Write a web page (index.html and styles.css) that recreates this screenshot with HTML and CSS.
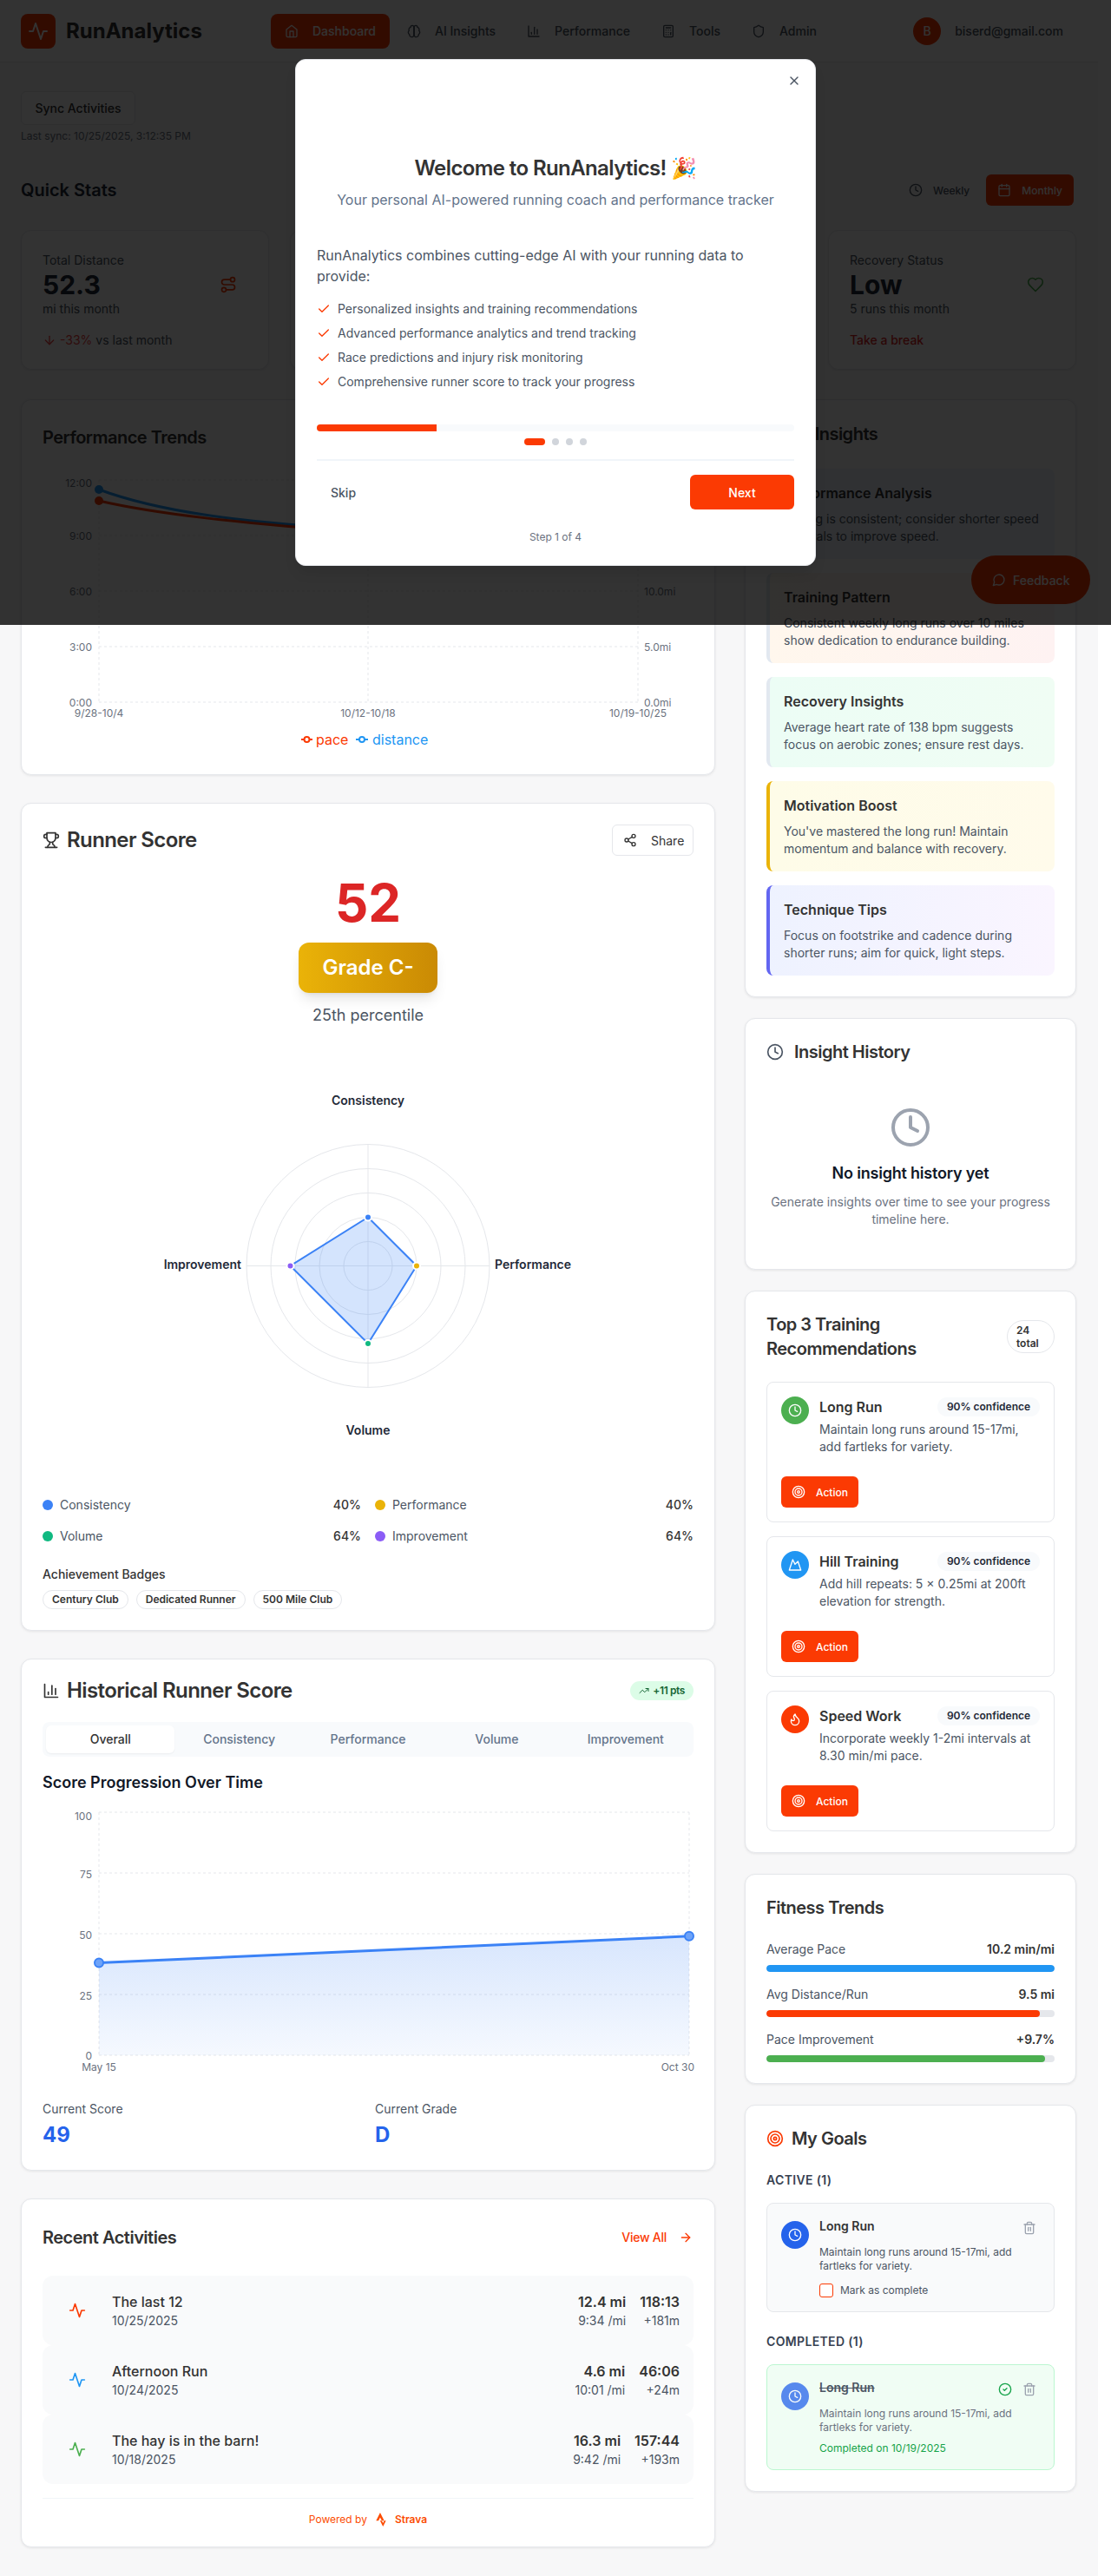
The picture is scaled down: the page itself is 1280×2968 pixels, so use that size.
FILE: index.html
```html
<!DOCTYPE html>
<html lang="en">
<head>
    <meta charset="UTF-8">
    <meta name="viewport" content="width=device-width, initial-scale=1.0">
    <title>RunAnalytics</title>
    <link rel="stylesheet" href="styles.css">
</head>
<body>

    <!-- Icon sprite -->
    <svg class="sprite" xmlns="http://www.w3.org/2000/svg">
        <symbol id="i-home" viewBox="0 0 24 24"><path d="m3 9 9-7 9 7v11a2 2 0 0 1-2 2H5a2 2 0 0 1-2-2z"/><polyline points="9 22 9 12 15 12 15 22"/></symbol>
        <symbol id="i-brain" viewBox="0 0 24 24"><path d="M12 5a3 3 0 1 0-5.997.125 4 4 0 0 0-2.526 5.77 4 4 0 0 0 .556 6.588A4 4 0 1 0 12 18Z"/><path d="M12 5a3 3 0 1 1 5.997.125 4 4 0 0 1 2.526 5.77 4 4 0 0 1-.556 6.588A4 4 0 1 1 12 18Z"/><path d="M12 5v13"/></symbol>
        <symbol id="i-bars" viewBox="0 0 24 24"><path d="M3 3v18h18"/><path d="M18 17V9"/><path d="M13 17V5"/><path d="M8 17v-3"/></symbol>
        <symbol id="i-calc" viewBox="0 0 24 24"><rect x="4" y="2" width="16" height="20" rx="2"/><line x1="8" y1="6" x2="16" y2="6"/><line x1="16" y1="14" x2="16" y2="18"/><path d="M16 10h.01"/><path d="M12 10h.01"/><path d="M8 10h.01"/><path d="M12 14h.01"/><path d="M8 14h.01"/><path d="M12 18h.01"/><path d="M8 18h.01"/></symbol>
        <symbol id="i-shield" viewBox="0 0 24 24"><path d="M20 13c0 5-3.5 7.5-7.66 8.95a1 1 0 0 1-.67-.01C7.5 20.5 4 18 4 13V6a1 1 0 0 1 1-1c2 0 4.5-1.2 6.24-2.72a1.17 1.17 0 0 1 1.52 0C14.51 3.81 17 5 19 5a1 1 0 0 1 1 1z"/></symbol>
        <symbol id="i-activity" viewBox="0 0 24 24"><path d="M22 12h-4l-3 9L9 3l-3 9H2"/></symbol>
        <symbol id="i-route" viewBox="0 0 24 24"><circle cx="6" cy="19" r="3"/><path d="M9 19h8.5a3.5 3.5 0 0 0 0-7h-11a3.5 3.5 0 0 1 0-7H15"/><circle cx="18" cy="5" r="3"/></symbol>
        <symbol id="i-heart" viewBox="0 0 24 24"><path d="M19 14c1.49-1.46 3-3.21 3-5.5A5.5 5.5 0 0 0 16.5 3c-1.76 0-3 .5-4.5 2-1.5-1.5-2.74-2-4.5-2A5.5 5.5 0 0 0 2 8.5c0 2.3 1.5 4.05 3 5.5l7 7Z"/></symbol>
        <symbol id="i-clock" viewBox="0 0 24 24"><circle cx="12" cy="12" r="10"/><polyline points="12 6 12 12 16 14"/></symbol>
        <symbol id="i-calendar" viewBox="0 0 24 24"><rect x="3" y="4" width="18" height="18" rx="2"/><line x1="16" y1="2" x2="16" y2="6"/><line x1="8" y1="2" x2="8" y2="6"/><line x1="3" y1="10" x2="21" y2="10"/></symbol>
        <symbol id="i-arrow-down" viewBox="0 0 24 24"><path d="M12 5v14"/><path d="m19 12-7 7-7-7"/></symbol>
        <symbol id="i-arrow-right" viewBox="0 0 24 24"><path d="M5 12h14"/><path d="m12 5 7 7-7 7"/></symbol>
        <symbol id="i-trophy" viewBox="0 0 24 24"><path d="M6 9H4.5a2.5 2.5 0 0 1 0-5H6"/><path d="M18 9h1.5a2.5 2.5 0 0 0 0-5H18"/><path d="M4 22h16"/><path d="M10 14.66V17c0 .55-.47.98-.97 1.21C7.85 18.75 7 20.24 7 22"/><path d="M14 14.66V17c0 .55.47.98.97 1.21C16.15 18.75 17 20.24 17 22"/><path d="M18 2H6v7a6 6 0 0 0 12 0V2Z"/></symbol>
        <symbol id="i-share" viewBox="0 0 24 24"><circle cx="18" cy="5" r="3"/><circle cx="6" cy="12" r="3"/><circle cx="18" cy="19" r="3"/><line x1="8.59" y1="13.51" x2="15.42" y2="17.49"/><line x1="15.41" y1="6.51" x2="8.59" y2="10.49"/></symbol>
        <symbol id="i-trend" viewBox="0 0 24 24"><polyline points="22 7 13.5 15.5 8.5 10.5 2 17"/><polyline points="16 7 22 7 22 13"/></symbol>
        <symbol id="i-target" viewBox="0 0 24 24"><circle cx="12" cy="12" r="10"/><circle cx="12" cy="12" r="6"/><circle cx="12" cy="12" r="2"/></symbol>
        <symbol id="i-mountain" viewBox="0 0 24 24"><path d="m8 3 4 8 5-5 5 15H2L8 3z"/></symbol>
        <symbol id="i-flame" viewBox="0 0 24 24"><path d="M8.5 14.5A2.5 2.5 0 0 0 11 12c0-1.38-.5-2-1-3-1.072-2.143-.224-4.054 2-6 .5 2.5 2 4.9 4 6.5 2 1.6 3 3.5 3 5.5a7 7 0 1 1-14 0c0-1.153.433-2.294 1-3a2.5 2.5 0 0 0 2.5 2.5z"/></symbol>
        <symbol id="i-trash" viewBox="0 0 24 24"><path d="M3 6h18"/><path d="M19 6v14c0 1-1 2-2 2H7c-1 0-2-1-2-2V6"/><path d="M8 6V4c0-1 1-2 2-2h4c1 0 2 1 2 2v2"/><line x1="10" y1="11" x2="10" y2="17"/><line x1="14" y1="11" x2="14" y2="17"/></symbol>
        <symbol id="i-check-circle" viewBox="0 0 24 24"><circle cx="12" cy="12" r="10"/><path d="m9 12 2 2 4-4"/></symbol>
        <symbol id="i-check" viewBox="0 0 24 24"><path d="M20 6 9 17l-5-5"/></symbol>
        <symbol id="i-x" viewBox="0 0 24 24"><path d="M18 6 6 18"/><path d="m6 6 12 12"/></symbol>
        <symbol id="i-message" viewBox="0 0 24 24"><path d="M7.9 20A9 9 0 1 0 4 16.1L2 22Z"/></symbol>
    </svg>

    <div class="page">
        <!-- Top navigation -->
        <header class="topbar">
            <div class="brand">
                <span class="brand-mark"><svg class="icon icon-24"><use href="#i-activity"/></svg></span>
                <span class="brand-name">RunAnalytics</span>
            </div>
            <nav class="nav-links">
                <a class="nav-link active"><svg class="icon"><use href="#i-home"/></svg>Dashboard</a>
                <a class="nav-link"><svg class="icon"><use href="#i-brain"/></svg>AI Insights</a>
                <a class="nav-link"><svg class="icon"><use href="#i-bars"/></svg>Performance</a>
                <a class="nav-link"><svg class="icon"><use href="#i-calc"/></svg>Tools</a>
                <a class="nav-link"><svg class="icon"><use href="#i-shield"/></svg>Admin</a>
            </nav>
            <div class="user-menu">
                <span class="avatar">B</span>
                <span class="user-email">biserd@gmail.com</span>
            </div>
        </header>

        <main class="main">
            <button class="sync-btn">Sync Activities</button>
            <div class="last-sync">Last sync: 10/25/2025, 3:12:35 PM</div>

            <!-- Quick stats -->
            <div class="stats-head">
                <h2 class="stats-title">Quick Stats</h2>
                <div class="range-toggle">
                    <button class="range-btn"><svg class="icon"><use href="#i-clock"/></svg>Weekly</button>
                    <button class="range-btn active"><svg class="icon"><use href="#i-calendar"/></svg>Monthly</button>
                </div>
            </div>

            <div class="stats-grid">
                <div class="stat-card">
                    <div class="stat-top">
                        <div>
                            <div class="stat-label">Total Distance</div>
                            <div class="stat-value">52.3</div>
                            <div class="stat-sub">mi this month</div>
                        </div>
                        <svg class="icon icon-20 stat-icon orange"><use href="#i-route"/></svg>
                    </div>
                    <div class="stat-note"><svg class="icon red"><use href="#i-arrow-down"/></svg><span class="red">-33%</span> vs last month</div>
                </div>
                <!-- These two cards sit fully behind the dialog -->
                <div class="stat-card"></div>
                <div class="stat-card"></div>
                <div class="stat-card">
                    <div class="stat-top">
                        <div>
                            <div class="stat-label">Recovery Status</div>
                            <div class="stat-value">Low</div>
                            <div class="stat-sub">5 runs this month</div>
                        </div>
                        <svg class="icon icon-20 stat-icon green"><use href="#i-heart"/></svg>
                    </div>
                    <div class="stat-note strong-red">Take a break</div>
                </div>
            </div>

            <div class="columns">
                <!-- Left column -->
                <div class="col">
                    <section class="card trends-card">
                        <h3 class="card-title">Performance Trends</h3>
                        <svg class="chart" width="750" height="338" viewBox="0 0 750 338">
                            <g class="grid-lines">
                                <line x1="65" y1="23" x2="686" y2="23"/>
                                <line x1="65" y1="87" x2="686" y2="87"/>
                                <line x1="65" y1="151" x2="686" y2="151"/>
                                <line x1="65" y1="215" x2="686" y2="215"/>
                                <line x1="65" y1="279" x2="686" y2="279"/>
                                <line x1="65" y1="23" x2="65" y2="279"/>
                                <line x1="375" y1="23" x2="375" y2="279"/>
                                <line x1="686" y1="23" x2="686" y2="279"/>
                            </g>
                            <g class="axis-text anchor-end">
                                <text x="57" y="26">12:00</text>
                                <text x="57" y="87">9:00</text>
                                <text x="57" y="151">6:00</text>
                                <text x="57" y="215">3:00</text>
                                <text x="57" y="279">0:00</text>
                            </g>
                            <g class="axis-text">
                                <text x="693" y="151">10.0mi</text>
                                <text x="693" y="215">5.0mi</text>
                                <text x="693" y="279">0.0mi</text>
                            </g>
                            <g class="axis-text anchor-mid">
                                <text x="65" y="291">9/28-10/4</text>
                                <text x="375" y="291">10/12-10/18</text>
                                <text x="686" y="291">10/19-10/25</text>
                            </g>
                            <path class="line-distance" d="M65 34 C130 58 220 72 375 80 S600 78 686 70"/>
                            <path class="line-pace" d="M65 47 C130 62 220 72 375 84 S600 90 686 82"/>
                            <circle class="dot-distance" cx="65" cy="34" r="5"/>
                            <circle class="dot-pace" cx="65" cy="47" r="5"/>
                            <line class="line-pace thin" x1="298" y1="322" x2="311" y2="322"/>
                            <circle class="legend-pace" cx="304.5" cy="322" r="3"/>
                            <text class="legend-text pace-text" x="315" y="322">pace</text>
                            <line class="line-distance thin" x1="361" y1="322" x2="375" y2="322"/>
                            <circle class="legend-distance" cx="368" cy="322" r="3"/>
                            <text class="legend-text distance-text" x="380" y="322">distance</text>
                        </svg>
                    </section>

                    <section class="card score-card">
                        <div class="card-head">
                            <h3 class="big-title"><svg class="icon icon-20"><use href="#i-trophy"/></svg>Runner Score</h3>
                            <button class="share-btn"><svg class="icon"><use href="#i-share"/></svg>Share</button>
                        </div>
                        <div class="score-num">52</div>
                        <div class="grade-badge">Grade C-</div>
                        <div class="percentile">25th percentile</div>

                        <svg class="chart" width="750" height="510" viewBox="0 0 750 510">
                            <g class="radar-grid">
                                <circle cx="375" cy="260.5" r="28"/>
                                <circle cx="375" cy="260.5" r="56"/>
                                <circle cx="375" cy="260.5" r="84"/>
                                <circle cx="375" cy="260.5" r="112"/>
                                <circle cx="375" cy="260.5" r="140"/>
                                <line x1="375" y1="120.5" x2="375" y2="400.5"/>
                                <line x1="235" y1="260.5" x2="515" y2="260.5"/>
                            </g>
                            <polygon class="radar-shape" points="375,204.5 431,260.5 375,350 285.5,260.5"/>
                            <circle class="radar-dot dot-a" cx="375" cy="204.5" r="4"/>
                            <circle class="radar-dot dot-b" cx="431" cy="260.5" r="4"/>
                            <circle class="radar-dot dot-c" cx="375" cy="350" r="4"/>
                            <circle class="radar-dot dot-d" cx="285.5" cy="260.5" r="4"/>
                            <text class="radar-label anchor-mid" x="375" y="69">Consistency</text>
                            <text class="radar-label" x="521" y="258">Performance</text>
                            <text class="radar-label anchor-mid" x="375" y="449">Volume</text>
                            <text class="radar-label anchor-end" x="229" y="258">Improvement</text>
                        </svg>

                        <div class="score-legend">
                            <div class="legend-row"><span class="legend-dot bg-a"></span><span class="legend-name">Consistency</span><span class="legend-val">40%</span></div>
                            <div class="legend-row"><span class="legend-dot bg-b"></span><span class="legend-name">Performance</span><span class="legend-val">40%</span></div>
                            <div class="legend-row"><span class="legend-dot bg-c"></span><span class="legend-name">Volume</span><span class="legend-val">64%</span></div>
                            <div class="legend-row"><span class="legend-dot bg-d"></span><span class="legend-name">Improvement</span><span class="legend-val">64%</span></div>
                        </div>

                        <div class="badges-title">Achievement Badges</div>
                        <div class="badges">
                            <span class="badge">Century Club</span>
                            <span class="badge">Dedicated Runner</span>
                            <span class="badge">500 Mile Club</span>
                        </div>
                    </section>

                    <section class="card history-card">
                        <div class="card-head">
                            <h3 class="big-title"><svg class="icon icon-20"><use href="#i-bars"/></svg>Historical Runner Score</h3>
                            <span class="points-badge"><svg class="icon icon-12"><use href="#i-trend"/></svg>+11 pts</span>
                        </div>
                        <div class="tabs">
                            <div class="tab active">Overall</div>
                            <div class="tab">Consistency</div>
                            <div class="tab">Performance</div>
                            <div class="tab">Volume</div>
                            <div class="tab">Improvement</div>
                        </div>
                        <h4 class="sub-title">Score Progression Over Time</h4>
                        <svg class="chart" width="751" height="312" viewBox="0 0 751 312">
                            <defs>
                                <linearGradient id="area-fill" x1="0" y1="0" x2="0" y2="1">
                                    <stop offset="0" stop-color="#3b82f6" stop-opacity="0.2"/>
                                    <stop offset="1" stop-color="#3b82f6" stop-opacity="0.05"/>
                                </linearGradient>
                            </defs>
                            <g class="grid-lines">
                                <line x1="65" y1="8" x2="745" y2="8"/>
                                <line x1="65" y1="78" x2="745" y2="78"/>
                                <line x1="65" y1="148" x2="745" y2="148"/>
                                <line x1="65" y1="218" x2="745" y2="218"/>
                                <line x1="65" y1="288" x2="745" y2="288"/>
                                <line x1="65" y1="8" x2="65" y2="288"/>
                                <line x1="745" y1="8" x2="745" y2="288"/>
                            </g>
                            <g class="axis-text anchor-end">
                                <text x="57" y="12.5">100</text>
                                <text x="57" y="79">75</text>
                                <text x="57" y="149">50</text>
                                <text x="57" y="219">25</text>
                                <text x="57" y="288">0</text>
                            </g>
                            <text class="axis-text anchor-mid" x="65" y="301">May 15</text>
                            <text class="axis-text anchor-end" x="751" y="301">Oct 30</text>
                            <polygon points="65,181.6 745,150.8 745,288 65,288" fill="url(#area-fill)"/>
                            <line class="score-line" x1="65" y1="181.6" x2="745" y2="150.8"/>
                            <circle class="score-dot" cx="65" cy="181.6" r="5"/>
                            <circle class="score-dot" cx="745" cy="150.8" r="5"/>
                        </svg>
                        <div class="current-row">
                            <div>
                                <div class="current-label">Current Score</div>
                                <div class="current-value">49</div>
                            </div>
                            <div>
                                <div class="current-label">Current Grade</div>
                                <div class="current-value">D</div>
                            </div>
                        </div>
                    </section>

                    <section class="card recent-card">
                        <div class="recent-head">
                            <h3 class="card-title">Recent Activities</h3>
                            <a class="view-all">View All<svg class="icon"><use href="#i-arrow-right"/></svg></a>
                        </div>
                        <div class="activity">
                            <span class="activity-icon orange"><svg class="icon icon-20"><use href="#i-activity"/></svg></span>
                            <div class="activity-info">
                                <div class="activity-name">The last 12</div>
                                <div class="activity-date">10/25/2025</div>
                            </div>
                            <div class="activity-stat">
                                <div class="stat-main">12.4 mi</div>
                                <div class="stat-minor">9:34 /mi</div>
                            </div>
                            <div class="activity-stat">
                                <div class="stat-main">118:13</div>
                                <div class="stat-minor">+181m</div>
                            </div>
                        </div>
                        <div class="activity">
                            <span class="activity-icon blue"><svg class="icon icon-20"><use href="#i-activity"/></svg></span>
                            <div class="activity-info">
                                <div class="activity-name">Afternoon Run</div>
                                <div class="activity-date">10/24/2025</div>
                            </div>
                            <div class="activity-stat">
                                <div class="stat-main">4.6 mi</div>
                                <div class="stat-minor">10:01 /mi</div>
                            </div>
                            <div class="activity-stat">
                                <div class="stat-main">46:06</div>
                                <div class="stat-minor">+24m</div>
                            </div>
                        </div>
                        <div class="activity">
                            <span class="activity-icon green"><svg class="icon icon-20"><use href="#i-activity"/></svg></span>
                            <div class="activity-info">
                                <div class="activity-name">The hay is in the barn!</div>
                                <div class="activity-date">10/18/2025</div>
                            </div>
                            <div class="activity-stat">
                                <div class="stat-main">16.3 mi</div>
                                <div class="stat-minor">9:42 /mi</div>
                            </div>
                            <div class="activity-stat">
                                <div class="stat-main">157:44</div>
                                <div class="stat-minor">+193m</div>
                            </div>
                        </div>
                        <div class="powered">
                            Powered by
                            <svg class="strava-mark" viewBox="0 0 24 24"><path d="M15.387 17.944l-2.089-4.116h-3.065L15.387 24l5.15-10.172h-3.066m-7.008-5.599l2.836 5.598h4.172L10.463 0l-7 13.828h4.169"/></svg>
                            <strong>Strava</strong>
                        </div>
                    </section>
                </div>

                <!-- Right column -->
                <div class="col col-right">
                    <section class="card insights-card">
                        <h3 class="card-title with-icon"><svg class="icon icon-20 orange"><use href="#i-brain"/></svg>AI Insights</h3>
                        <div class="insight insight-blue">
                            <h4>Performance Analysis</h4>
                            <p>Pacing is consistent; consider shorter speed intervals to improve speed.</p>
                        </div>
                        <div class="insight insight-orange">
                            <h4>Training Pattern</h4>
                            <p>Consistent weekly long runs over 10 miles show dedication to endurance building.</p>
                        </div>
                        <div class="insight insight-green">
                            <h4>Recovery Insights</h4>
                            <p>Average heart rate of 138 bpm suggests focus on aerobic zones; ensure rest days.</p>
                        </div>
                        <div class="insight insight-yellow">
                            <h4>Motivation Boost</h4>
                            <p>You've mastered the long run! Maintain momentum and balance with recovery.</p>
                        </div>
                        <div class="insight insight-purple">
                            <h4>Technique Tips</h4>
                            <p>Focus on footstrike and cadence during shorter runs; aim for quick, light steps.</p>
                        </div>
                    </section>

                    <section class="card empty-card">
                        <h3 class="card-title with-icon"><svg class="icon icon-20 slate"><use href="#i-clock"/></svg>Insight History</h3>
                        <div class="empty-state">
                            <svg class="icon icon-48"><use href="#i-clock"/></svg>
                            <div class="empty-title">No insight history yet</div>
                            <p>Generate insights over time to see your progress timeline here.</p>
                        </div>
                    </section>

                    <section class="card recs-card">
                        <div class="recs-head">
                            <h3 class="card-title">Top 3 Training Recommendations</h3>
                            <span class="total-badge">24 total</span>
                        </div>
                        <div class="rec">
                            <span class="round-icon bg-green"><svg class="icon"><use href="#i-clock"/></svg></span>
                            <div class="rec-body">
                                <div class="rec-top">
                                    <span class="rec-name">Long Run</span>
                                    <span class="confidence">90% confidence</span>
                                </div>
                                <p>Maintain long runs around 15-17mi, add fartleks for variety.</p>
                            </div>
                            <button class="action-btn"><svg class="icon"><use href="#i-target"/></svg>Action</button>
                        </div>
                        <div class="rec">
                            <span class="round-icon bg-blue"><svg class="icon"><use href="#i-mountain"/></svg></span>
                            <div class="rec-body">
                                <div class="rec-top">
                                    <span class="rec-name">Hill Training</span>
                                    <span class="confidence">90% confidence</span>
                                </div>
                                <p>Add hill repeats: 5 × 0.25mi at 200ft elevation for strength.</p>
                            </div>
                            <button class="action-btn"><svg class="icon"><use href="#i-target"/></svg>Action</button>
                        </div>
                        <div class="rec">
                            <span class="round-icon bg-orange"><svg class="icon"><use href="#i-flame"/></svg></span>
                            <div class="rec-body">
                                <div class="rec-top">
                                    <span class="rec-name">Speed Work</span>
                                    <span class="confidence">90% confidence</span>
                                </div>
                                <p>Incorporate weekly 1-2mi intervals at 8.30 min/mi pace.</p>
                            </div>
                            <button class="action-btn"><svg class="icon"><use href="#i-target"/></svg>Action</button>
                        </div>
                    </section>

                    <section class="card fitness-card">
                        <h3 class="card-title">Fitness Trends</h3>
                        <div class="metric">
                            <div class="metric-row"><span>Average Pace</span><strong>10.2 min/mi</strong></div>
                            <div class="track"><div class="fill bg-blue" style="width: 100%"></div></div>
                        </div>
                        <div class="metric">
                            <div class="metric-row"><span>Avg Distance/Run</span><strong>9.5 mi</strong></div>
                            <div class="track"><div class="fill bg-orange" style="width: 95%"></div></div>
                        </div>
                        <div class="metric">
                            <div class="metric-row"><span>Pace Improvement</span><strong>+9.7%</strong></div>
                            <div class="track"><div class="fill bg-green" style="width: 96.7%"></div></div>
                        </div>
                    </section>

                    <section class="card goals-card">
                        <h3 class="card-title goals-title"><svg class="icon icon-20 orange"><use href="#i-target"/></svg>My Goals</h3>
                        <div class="goal-group">ACTIVE (1)</div>
                        <div class="goal">
                            <span class="round-icon goal-icon bg-royal"><svg class="icon"><use href="#i-clock"/></svg></span>
                            <div class="goal-body">
                                <div class="goal-top">
                                    <span class="goal-name">Long Run</span>
                                    <svg class="icon goal-trash"><use href="#i-trash"/></svg>
                                </div>
                                <p class="goal-text">Maintain long runs around 15-17mi, add fartleks for variety.</p>
                                <div class="goal-mark"><span class="checkbox"></span>Mark as complete</div>
                            </div>
                        </div>
                        <div class="goal-group">COMPLETED (1)</div>
                        <div class="goal done">
                            <span class="round-icon goal-icon bg-royal"><svg class="icon"><use href="#i-clock"/></svg></span>
                            <div class="goal-body">
                                <div class="goal-top">
                                    <span class="goal-name">Long Run</span>
                                    <svg class="icon goal-check"><use href="#i-check-circle"/></svg>
                                    <svg class="icon goal-trash"><use href="#i-trash"/></svg>
                                </div>
                                <p class="goal-text">Maintain long runs around 15-17mi, add fartleks for variety.</p>
                                <div class="goal-date">Completed on 10/19/2025</div>
                            </div>
                        </div>
                    </section>
                </div>
            </div>
        </main>

        <button class="feedback-btn"><svg class="icon"><use href="#i-message"/></svg>Feedback</button>
    </div>

    <!-- Welcome dialog -->
    <div class="overlay">
        <div class="modal">
            <svg class="icon modal-close"><use href="#i-x"/></svg>
            <div class="modal-head">
                <h2>Welcome to RunAnalytics! 🎉</h2>
                <p>Your personal AI-powered running coach and performance tracker</p>
            </div>
            <p class="modal-text">RunAnalytics combines cutting-edge AI with your running data to provide:</p>
            <ul class="modal-list">
                <li><svg class="icon orange"><use href="#i-check"/></svg>Personalized insights and training recommendations</li>
                <li><svg class="icon orange"><use href="#i-check"/></svg>Advanced performance analytics and trend tracking</li>
                <li><svg class="icon orange"><use href="#i-check"/></svg>Race predictions and injury risk monitoring</li>
                <li><svg class="icon orange"><use href="#i-check"/></svg>Comprehensive runner score to track your progress</li>
            </ul>
            <div class="modal-progress"><div class="modal-progress-fill"></div></div>
            <div class="step-dots">
                <span class="step-dot current"></span>
                <span class="step-dot"></span>
                <span class="step-dot"></span>
                <span class="step-dot"></span>
            </div>
            <div class="modal-actions">
                <button class="skip-btn">Skip</button>
                <button class="next-btn">Next</button>
            </div>
            <div class="step-text">Step 1 of 4</div>
        </div>
    </div>

</body>
</html>
```

FILE: styles.css
```css
* {
    box-sizing: border-box;
}
body {
    margin: 0;
    background-color: #fff;
    color: #333;
    font-family: Inter, "Noto Sans", sans-serif;
    font-size: 14px;
    line-height: 20px;
}
h2, h3, h4, p, ul {
    margin: 0;
    padding: 0;
}
button {
    font-family: inherit;
}
.sprite {
    display: none;
}

/* Icons */
.icon {
    width: 16px;
    height: 16px;
    flex: none;
    fill: none;
    stroke: currentColor;
    stroke-width: 2;
    stroke-linecap: round;
    stroke-linejoin: round;
}
.icon-12 { width: 12px; height: 12px; }
.icon-20 { width: 20px; height: 20px; }
.icon-24 { width: 24px; height: 24px; }
.icon-48 { width: 48px; height: 48px; }
.orange { color: #fb3a03; }
.blue { color: #2196f3; }
.green { color: #4caf50; }
.red { color: #ef4444; }
.slate { color: #4b5563; }
.bg-orange { background-color: #fb3a03; }
.bg-blue { background-color: #2196f3; }
.bg-green { background-color: #4caf50; }
.bg-royal { background-color: #2563eb; }

.page {
    position: relative;
    width: 1265px;
    min-height: 2968px;
    background-color: #f7f7f8;
}

/* Top navigation */
.topbar {
    display: flex;
    align-items: center;
    height: 72px;
    padding: 0 40px 0 24px;
    background-color: #fff;
    border-bottom: 1px solid #e5e7eb;
}
.brand {
    display: flex;
    align-items: center;
    gap: 12px;
    width: 288px;
}
.brand-mark {
    display: flex;
    align-items: center;
    justify-content: center;
    width: 40px;
    height: 40px;
    border-radius: 8px;
    background-color: #fb3a03;
    color: #fff;
}
.brand-name {
    font-size: 24px;
    line-height: 32px;
    font-weight: 700;
    color: #333;
}
.nav-links {
    display: flex;
    gap: 4px;
}
.nav-link {
    display: flex;
    align-items: center;
    gap: 16px;
    height: 40px;
    padding: 0 16px;
    border-radius: 8px;
    color: #4b5563;
    font-weight: 500;
}
.nav-link.active {
    background-color: #fb3a03;
    color: #fff;
}
.user-menu {
    display: flex;
    align-items: center;
    gap: 16px;
    margin-left: auto;
}
.avatar {
    display: flex;
    align-items: center;
    justify-content: center;
    width: 32px;
    height: 32px;
    border-radius: 50%;
    background-color: #fb3a03;
    color: #fff;
    font-weight: 500;
}
.user-email {
    font-weight: 500;
    color: #4b5563;
}

.main {
    padding: 33px 25px 0 24px;
}
.sync-btn {
    display: block;
    width: 132px;
    height: 39px;
    padding: 0;
    border: 1px solid #e5e7eb;
    border-radius: 6px;
    background-color: #fff;
    color: #333;
    font-size: 14px;
    font-weight: 500;
}
.last-sync {
    margin-top: 5px;
    font-size: 12px;
    line-height: 16px;
    color: #6b7280;
}

/* Quick stats */
.stats-head {
    display: flex;
    align-items: center;
    justify-content: space-between;
    margin: 32px 0 24px;
}
.stats-title {
    font-size: 20px;
    line-height: 28px;
    font-weight: 600;
    color: #1f2937;
}
.range-toggle {
    display: flex;
    gap: 6px;
    margin-right: -1px;
    padding: 4px;
    border-radius: 8px;
    background-color: #f9fafb;
}
.range-btn {
    display: flex;
    align-items: center;
    gap: 12px;
    height: 36px;
    padding: 0 13px;
    border: 0;
    border-radius: 6px;
    background: none;
    color: #4b5563;
    font-size: 12px;
    font-weight: 500;
}
.range-btn.active {
    background-color: #fb3a03;
    color: #fff;
}
.stats-grid {
    display: grid;
    grid-template-columns: repeat(4, 1fr);
    gap: 24px;
}
.stat-card {
    height: 161px;
    padding: 24px;
    background-color: #fff;
    border: 1px solid #e5e7eb;
    border-radius: 12px;
    box-shadow: 0 1px 2px rgba(0, 0, 0, 0.05);
}
.stat-top {
    display: flex;
    align-items: center;
    justify-content: space-between;
}
.stat-icon {
    margin-right: 12px;
}
.stat-label, .stat-sub {
    color: #4b5563;
}
.stat-value {
    font-size: 30px;
    line-height: 36px;
    font-weight: 700;
    color: #1f2937;
}
.stat-note {
    display: flex;
    align-items: center;
    gap: 4px;
    margin-top: 16px;
    color: #4b5563;
}
.strong-red {
    color: #dc2626;
    font-weight: 500;
}

/* Columns and cards */
.columns {
    display: grid;
    grid-template-columns: 800px 382px;
    gap: 34px;
    margin-top: 34px;
    align-items: start;
}
.col {
    display: flex;
    flex-direction: column;
    gap: 32px;
}
.col-right {
    gap: 24px;
}
.card {
    padding: 24px;
    background-color: #fff;
    border: 1px solid #e5e7eb;
    border-radius: 12px;
    box-shadow: 0 1px 3px rgba(0, 0, 0, 0.08);
}
.card-title {
    font-size: 20px;
    line-height: 28px;
    font-weight: 600;
    letter-spacing: -0.5px;
    color: #333;
}
.card-title.with-icon {
    display: flex;
    align-items: center;
    gap: 12px;
}
.card-head {
    display: flex;
    align-items: center;
    justify-content: space-between;
}
.big-title {
    display: flex;
    align-items: center;
    gap: 8px;
    font-size: 24px;
    line-height: 32px;
    font-weight: 600;
    letter-spacing: -0.6px;
    color: #333;
}
.chart {
    display: block;
}

/* Chart parts */
.grid-lines line {
    stroke: #e5e7eb;
    stroke-dasharray: 3 3;
}
.axis-text, .axis-text text {
    font-size: 12px;
    fill: #6b7280;
    dominant-baseline: central;
}
.anchor-end, .anchor-end text {
    text-anchor: end;
}
.anchor-mid, .anchor-mid text {
    text-anchor: middle;
}
.line-distance, .line-pace {
    fill: none;
    stroke-width: 3;
}
.line-distance { stroke: #2196f3; }
.line-pace { stroke: #fb3a03; }
.line-distance.thin, .line-pace.thin {
    stroke-width: 2;
}
.dot-distance { fill: #2196f3; }
.dot-pace { fill: #fb3a03; }
.legend-pace, .legend-distance {
    fill: #fff;
    stroke-width: 2;
}
.legend-pace { stroke: #fb3a03; }
.legend-distance { stroke: #2196f3; }
.legend-text {
    font-size: 16px;
    dominant-baseline: central;
}
.pace-text { fill: #fb3a03; }
.distance-text { fill: #2196f3; }
.score-line {
    stroke: #3b82f6;
    stroke-width: 3;
}
.score-dot {
    fill: #6ea3f8;
    stroke: #3b82f6;
    stroke-width: 2;
}

/* Performance trends */
.trends-card {
    padding-top: 29px;
}
.trends-card .chart {
    margin-top: 12px;
}

/* Runner score */
.share-btn {
    display: flex;
    align-items: center;
    gap: 16px;
    width: 94px;
    height: 36px;
    padding: 0 12px;
    background-color: #fff;
    border: 1px solid #e5e7eb;
    border-radius: 6px;
    color: #333;
    font-size: 14px;
    font-weight: 400;
}
.score-num {
    margin-top: 24px;
    text-align: center;
    font-size: 60px;
    line-height: 60px;
    font-weight: 700;
    color: #dc2626;
}
.grade-badge {
    width: 160px;
    margin: 16px auto 0;
    padding: 13px 0;
    border-radius: 12px;
    background: linear-gradient(to right, #eab308, #ca8a04);
    box-shadow: 0 10px 15px -3px rgba(0, 0, 0, 0.1), 0 4px 6px -4px rgba(0, 0, 0, 0.1);
    text-align: center;
    color: #fff;
    font-size: 24px;
    line-height: 32px;
    font-weight: 600;
}
.percentile {
    margin: 12px 0 14px;
    text-align: center;
    font-size: 18px;
    line-height: 28px;
    color: #4b5563;
}
.radar-grid circle, .radar-grid line {
    fill: none;
    stroke: #e5e7eb;
}
.radar-shape {
    fill: #3b82f6;
    fill-opacity: 0.22;
    stroke: #3b82f6;
    stroke-width: 2;
}
.radar-dot {
    stroke: #fff;
    stroke-width: 2;
}
.dot-a { fill: #3b82f6; }
.dot-b { fill: #eab308; }
.dot-c { fill: #10b981; }
.dot-d { fill: #8b5cf6; }
.radar-label {
    font-size: 14px;
    font-weight: 600;
    fill: #1f2937;
    dominant-baseline: central;
}
.score-legend {
    display: grid;
    grid-template-columns: 1fr 1fr;
    gap: 16px;
    margin-top: 16px;
}
.legend-row {
    display: flex;
    align-items: center;
}
.legend-dot {
    width: 12px;
    height: 12px;
    margin-right: 8px;
    border-radius: 50%;
}
.bg-a { background-color: #3b82f6; }
.bg-b { background-color: #eab308; }
.bg-c { background-color: #10b981; }
.bg-d { background-color: #8b5cf6; }
.legend-name {
    color: #4b5563;
}
.legend-val {
    margin-left: auto;
    font-weight: 500;
}
.badges-title {
    margin-top: 24px;
    font-weight: 500;
}
.badges {
    display: flex;
    gap: 9px;
    margin-top: 8px;
}
.badge {
    height: 22px;
    padding: 0 10px;
    border: 1px solid #e5e7eb;
    border-radius: 11px;
    font-size: 12px;
    line-height: 20px;
    font-weight: 600;
    color: #333;
}

/* Historical score */
.history-card {
    padding-top: 20px;
}
.points-badge {
    display: flex;
    align-items: center;
    gap: 4px;
    height: 22px;
    padding: 0 10px;
    border-radius: 11px;
    background-color: #dcfce7;
    color: #166534;
    font-size: 12px;
    font-weight: 600;
    letter-spacing: -0.4px;
}
.tabs {
    display: flex;
    height: 40px;
    margin-top: 20px;
    padding: 4px;
    border-radius: 8px;
    background-color: #f8fafc;
}
.tab {
    flex: 1;
    display: flex;
    align-items: center;
    justify-content: center;
    border-radius: 6px;
    font-weight: 500;
    color: #64748b;
}
.tab.active {
    background-color: #fff;
    color: #333;
    box-shadow: 0 1px 2px rgba(0, 0, 0, 0.05);
}
.sub-title {
    margin: 16px 0 12px;
    font-size: 18px;
    line-height: 28px;
    font-weight: 600;
    color: #111827;
}
.current-row {
    display: grid;
    grid-template-columns: 1fr 1fr;
    gap: 16px;
    margin-top: 28px;
}
.current-label {
    color: #4b5563;
}
.current-value {
    margin-top: 4px;
    font-size: 24px;
    line-height: 32px;
    font-weight: 700;
    color: #2563eb;
}

/* Recent activities */
.recent-card {
    padding: 30px 24px 23px;
}
.recent-head {
    display: flex;
    align-items: center;
    justify-content: space-between;
    margin-bottom: 30px;
}
.view-all {
    display: flex;
    align-items: center;
    gap: 14px;
    margin-right: 1px;
    color: #fb3a03;
    font-weight: 500;
    letter-spacing: -0.25px;
}
.activity {
    display: flex;
    align-items: center;
    gap: 16px;
    height: 80px;
    padding: 0 16px;
    border-radius: 12px;
    background-color: #f9fafb;
}
.activity-icon {
    display: flex;
    justify-content: center;
    width: 48px;
}
.activity-info {
    flex: 1;
}
.activity-name, .stat-main {
    font-size: 16px;
    line-height: 24px;
    font-weight: 500;
    color: #333;
}
.stat-main {
    font-weight: 600;
}
.activity-date, .stat-minor {
    color: #4b5563;
}
.activity-stat {
    text-align: right;
}
.powered {
    display: flex;
    align-items: center;
    justify-content: center;
    gap: 8px;
    margin-top: 16px;
    padding-top: 16px;
    border-top: 1px solid #f1f5f9;
    font-size: 12px;
    line-height: 16px;
    color: #fc4c02;
}
.powered strong {
    font-weight: 600;
}
.strava-mark {
    width: 16px;
    height: 16px;
    fill: #fc4c02;
}

/* AI insights */
.insights-card {
    padding-top: 25px;
}
.insights-card .card-title {
    margin-bottom: 26px;
}
.insight {
    height: 104px;
    margin-top: 16px;
    padding: 16px;
    border-left: 4px solid #e2e8f0;
    border-radius: 8px;
}
.insights-card .card-title + .insight {
    margin-top: 0;
}
.insight h4 {
    font-size: 16px;
    line-height: 24px;
    font-weight: 600;
    color: #333;
    margin-bottom: 8px;
}
.insight p {
    color: #4b5563;
}
.insight-blue { background: linear-gradient(to right, #eff6ff, #eef2ff); }
.insight-orange { background: linear-gradient(to right, #fff7ed, #fef2f2); }
.insight-green { background: linear-gradient(to right, #ecfdf5, #f0fdf4); }
.insight-yellow {
    background: linear-gradient(to right, #fefce8, #fffbeb);
    border-left-color: #eab308;
}
.insight-purple {
    background: linear-gradient(to right, #eef2ff, #faf5ff);
    border-left-color: #6366f1;
}

/* Insight history */
.empty-card {
    height: 290px;
}
.empty-state {
    margin-top: 49px;
    text-align: center;
}
.empty-state .icon {
    display: block;
    margin: 0 auto;
    color: #9ca3af;
}
.empty-title {
    margin-top: 17px;
    font-size: 18px;
    line-height: 24px;
    font-weight: 600;
    letter-spacing: -0.2px;
    color: #111827;
}
.empty-state p {
    margin-top: 11px;
    color: #6b7280;
}

/* Recommendations */
.recs-head {
    display: flex;
    align-items: center;
    justify-content: space-between;
    gap: 16px;
    margin-bottom: 24px;
}
.total-badge {
    width: 61px;
    padding: 3px 10px;
    border: 1px solid #e5e7eb;
    border-radius: 19px;
    font-size: 12px;
    line-height: 15px;
    font-weight: 600;
    color: #333;
}
.rec {
    display: grid;
    grid-template-columns: 32px 1fr;
    column-gap: 12px;
    height: 162px;
    margin-top: 16px;
    padding: 16px;
    border: 1px solid #e5e7eb;
    border-radius: 8px;
}
.recs-head + .rec {
    margin-top: 0;
}
.round-icon {
    display: flex;
    align-items: center;
    justify-content: center;
    width: 32px;
    height: 32px;
    border-radius: 50%;
    color: #fff;
}
.rec-top {
    display: flex;
    align-items: center;
    justify-content: space-between;
    height: 24px;
}
.rec-name {
    font-size: 16px;
    line-height: 24px;
    font-weight: 600;
    color: #333;
}
.confidence {
    width: 118px;
    height: 22px;
    border-radius: 11px;
    background-color: #f8fafc;
    text-align: center;
    font-size: 12px;
    line-height: 21px;
    font-weight: 600;
    color: #1f2937;
}
.rec-body p {
    margin-top: 4px;
    color: #4b5563;
}
.action-btn {
    grid-column: 1 / -1;
    display: flex;
    align-items: center;
    gap: 12px;
    width: 89px;
    height: 36px;
    margin-top: 24px;
    padding: 0 12px;
    border: 0;
    border-radius: 6px;
    background-color: #fb3a03;
    color: #fff;
    font-size: 12px;
    font-weight: 500;
}

/* Fitness trends */
.metric {
    margin-top: 16px;
}
.card-title + .metric {
    margin-top: 24px;
}
.metric-row {
    display: flex;
    justify-content: space-between;
    margin-bottom: 8px;
    color: #4b5563;
}
.metric-row strong {
    font-weight: 600;
    color: #333;
}
.track {
    height: 8px;
    border-radius: 4px;
    background-color: #e5e7eb;
    overflow: hidden;
}
.fill {
    height: 100%;
    border-radius: 4px;
}

/* Goals */
.card-title.goals-title {
    display: flex;
    align-items: center;
    gap: 9px;
}
.goal-group {
    margin: 24px 0 16px;
    font-weight: 600;
    letter-spacing: 0.35px;
    color: #374151;
}
.goal {
    display: flex;
    gap: 12px;
    padding: 16px;
    background-color: #f9fafb;
    border: 1px solid #e5e7eb;
    border-radius: 8px;
}
.goal-icon {
    flex: none;
    margin-top: 4px;
}
.goal-body {
    flex: 1;
}
.goal-top {
    display: flex;
    align-items: center;
}
.goal-name {
    flex: 1;
    font-weight: 600;
    color: #333;
}
.goal-trash {
    margin: 4px 4px 0 0;
    color: #9ca3af;
}
.goal-check {
    margin: 4px 12px 0 0;
    color: #16a34a;
}
.goal-text {
    margin-top: 12px;
    font-size: 12px;
    line-height: 16px;
    color: #4b5563;
}
.goal-mark {
    display: flex;
    align-items: center;
    gap: 8px;
    margin-top: 12px;
    font-size: 12px;
    line-height: 16px;
    color: #4b5563;
}
.checkbox {
    width: 16px;
    height: 16px;
    border: 1px solid #fb3a03;
    border-radius: 3px;
    background-color: #fff;
}
.goal.done {
    background-color: #f0fdf4;
    border-color: #bbf7d0;
}
.goal.done .goal-icon {
    opacity: 0.75;
}
.goal.done .goal-name {
    text-decoration: line-through;
    color: #4b5563;
}
.goal.done .goal-text {
    color: #6b7280;
}
.goal-date {
    margin-top: 8px;
    font-size: 12px;
    line-height: 16px;
    color: #16a34a;
}

.feedback-btn {
    position: absolute;
    top: 640px;
    left: 1119px;
    display: flex;
    align-items: center;
    gap: 8px;
    width: 137px;
    height: 56px;
    padding: 0 24px;
    border: 0;
    border-radius: 28px;
    background-color: #fb3a03;
    color: #fff;
    font-size: 14px;
    font-weight: 500;
}

/* Welcome dialog */
.overlay {
    position: absolute;
    top: 0;
    left: 0;
    display: flex;
    align-items: center;
    justify-content: center;
    width: 1280px;
    height: 720px;
    background-color: rgba(0, 0, 0, 0.8);
}
.modal {
    position: relative;
    width: 600px;
    padding: 24px;
    background-color: #fff;
    border: 1px solid #e5e7eb;
    border-radius: 12px;
    box-shadow: 0 10px 15px -3px rgba(0, 0, 0, 0.1);
}
.modal-close {
    position: absolute;
    top: 16px;
    right: 16px;
    color: #4b5563;
}
.modal-head {
    padding-top: 85px;
    text-align: center;
}
.modal-head h2 {
    font-size: 24px;
    line-height: 32px;
    font-weight: 600;
    letter-spacing: -0.6px;
    color: #333;
}
.modal-head p {
    margin-top: 8px;
    font-size: 16px;
    line-height: 24px;
    color: #64748b;
}
.modal-text {
    margin-top: 40px;
    font-size: 16px;
    line-height: 24px;
    color: #4b5563;
}
.modal-list {
    display: flex;
    flex-direction: column;
    gap: 8px;
    margin-top: 16px;
    list-style: none;
}
.modal-list li {
    display: flex;
    align-items: center;
    gap: 8px;
    color: #4b5563;
}
.modal-progress {
    height: 8px;
    margin-top: 39px;
    border-radius: 4px;
    background-color: #f8fafc;
    overflow: hidden;
}
.modal-progress-fill {
    width: 25%;
    height: 100%;
    background-color: #fb3a03;
}
.step-dots {
    display: flex;
    justify-content: center;
    gap: 8px;
    margin-top: 8px;
}
.step-dot {
    width: 8px;
    height: 8px;
    border-radius: 50%;
    background-color: #d1d5db;
}
.step-dot.current {
    width: 24px;
    border-radius: 4px;
    background-color: #fb3a03;
}
.modal-actions {
    display: flex;
    align-items: center;
    justify-content: space-between;
    margin-top: 16px;
    padding-top: 16px;
    border-top: 2px solid #f1f5f9;
}
.skip-btn {
    padding: 0 16px;
    border: 0;
    background: none;
    color: #4b5563;
    font-size: 14px;
    font-weight: 500;
}
.next-btn {
    width: 120px;
    height: 40px;
    border: 0;
    border-radius: 6px;
    background-color: #fb3a03;
    color: #fff;
    font-size: 14px;
    font-weight: 500;
}
.step-text {
    margin-top: 24px;
    text-align: center;
    font-size: 12px;
    line-height: 16px;
    color: #6b7280;
}
```
